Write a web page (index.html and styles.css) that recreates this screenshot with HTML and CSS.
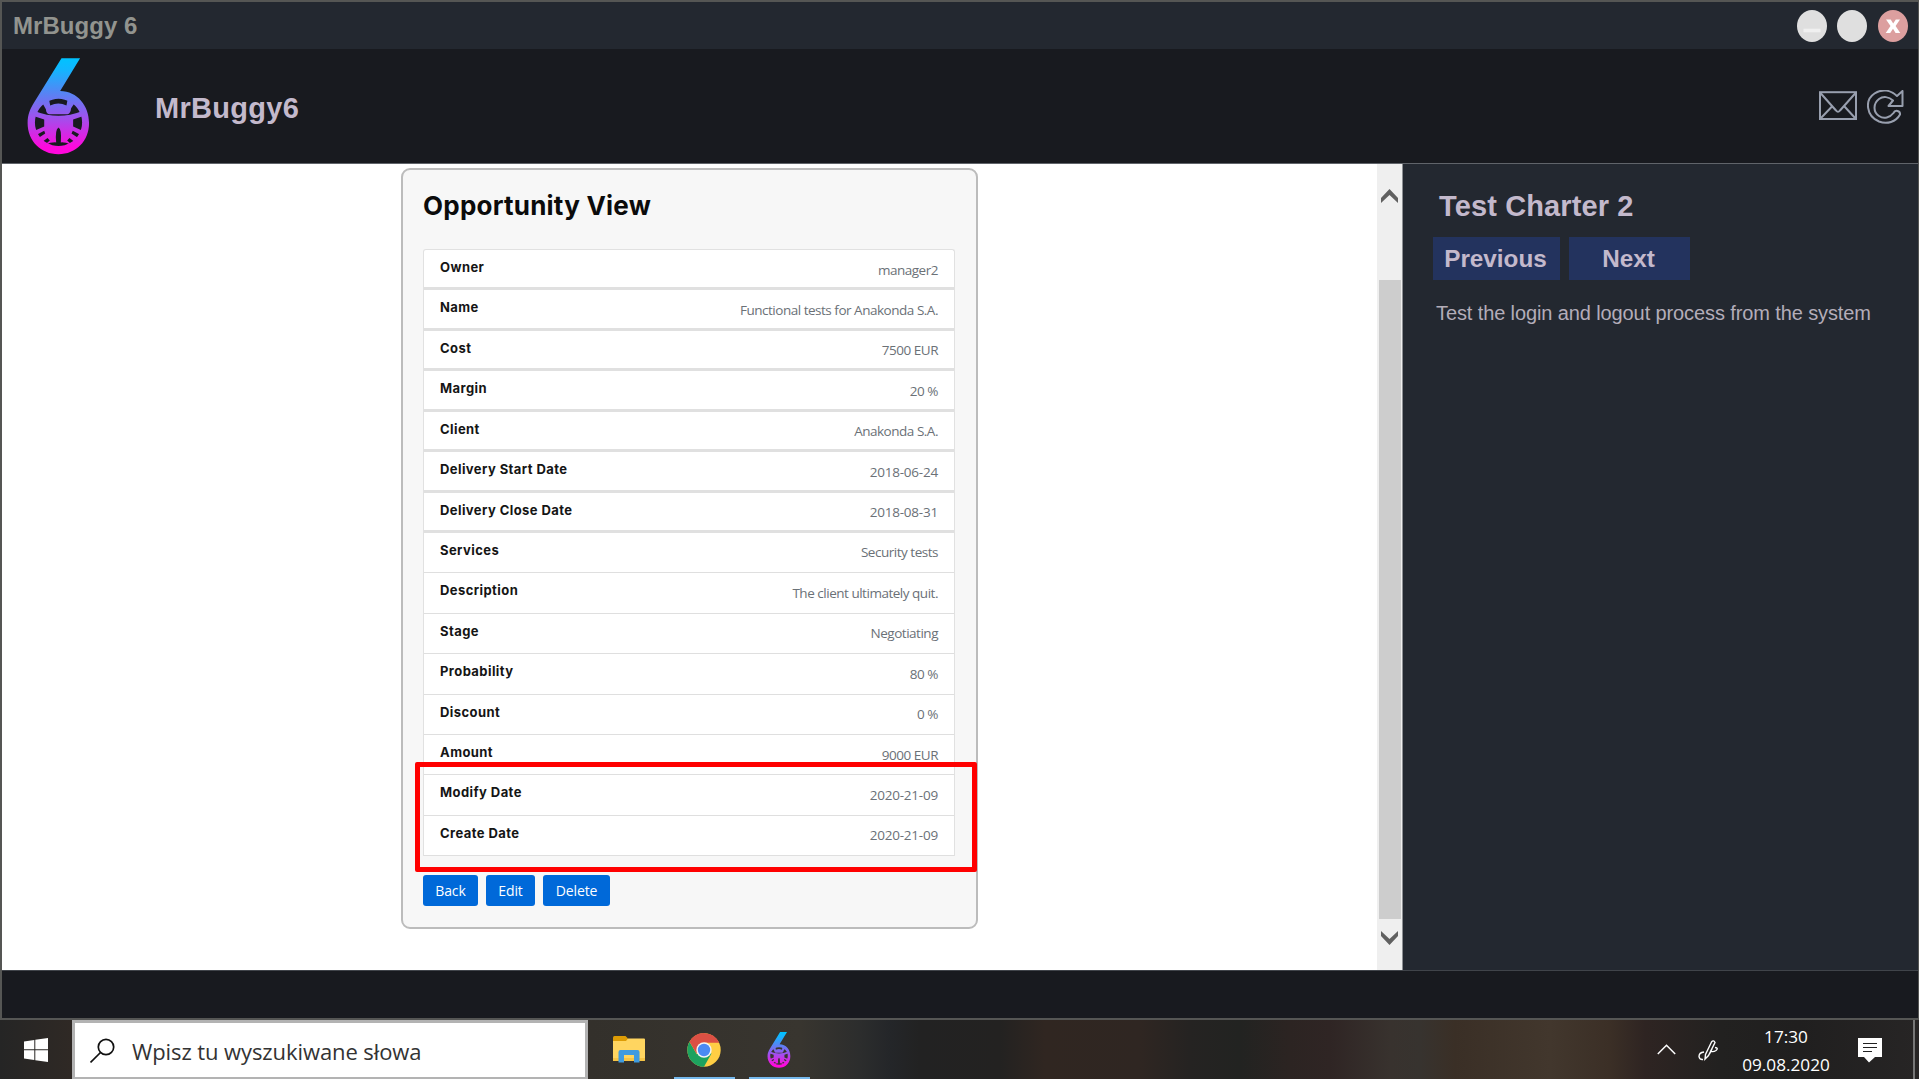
FILE: index.html
```html
<!DOCTYPE html>
<html lang="en">
<head>
<meta charset="utf-8">
<title>MrBuggy 6</title>
<link rel="stylesheet" href="styles.css">
</head>
<body>
<svg class="defs" width="0" height="0" aria-hidden="true">
  <defs>
    <linearGradient id="neon" gradientUnits="userSpaceOnUse" x1="0" y1="24" x2="0" y2="314">
      <stop offset="0" stop-color="#00c3ff"/>
      <stop offset=".12" stop-color="#12b6ff"/>
      <stop offset=".36" stop-color="#5585f4"/>
      <stop offset=".6" stop-color="#9a55ee"/>
      <stop offset=".93" stop-color="#ff08dc"/>
      <stop offset="1" stop-color="#ff08dc"/>
    </linearGradient>
    <symbol id="logo" viewBox="52 24 188 292">
      <path fill="url(#neon)" fill-rule="evenodd" d="M155 25H211L151 123C203 124 238 167 238 220C238 274 199 314 146 314C93 314 53 274 53 220C53 194 61 177 72 159ZM146 147A71 71 0 1 0 146.1 147Z"/>
      <path fill="url(#neon)" d="M98 160 117 146 121 167Q146 155 170 167L174 146 194 160 184 175Q182 192 173 193H118Q109 191 108 178Z"/>
      <path fill="url(#neon)" d="M76 184Q146 212 216 184L219 199 190 209V230L220 244 216 257 189 243 185 251 209 267 200 281 179 265 172 272 186 285Q162 276 153 278 156 237 146 233 135 240 139 278 124 277 105 285L120 272 113 265 91 281 82 267 106 251 103 243 76 257 72 244 103 230V209L73 199Z"/>
    </symbol>
  </defs>
</svg>
<div class="window">
  <header class="titlebar">
    <span class="titlebar-text">MrBuggy 6</span>
    <div class="window-buttons">
      <span class="dot"><svg width="30" height="32" viewBox="0 0 30 32"><path d="M6.500 20.500H23.500" stroke="#f0f0f0" stroke-width="3.500"/></svg></span>
      <span class="dot"></span>
      <span class="dot dot-close"><svg width="30" height="32" viewBox="0 0 30 32"><path d="M8 9.500H12.700L15.200 13.500 17.800 9.500H22L17.600 16 22.300 23H17.600L15 18.700 12.200 23H7.700L12.500 16Z" fill="#fff"/></svg></span>
    </div>
  </header>
  <div class="appbar">
    <svg class="logo" width="63" height="97"><use href="#logo"/></svg>
    <h1 class="app-name">MrBuggy6</h1>
    <div class="app-icons">
      <svg width="38" height="30" viewBox="0 0 38 30" fill="none" stroke="#989fae" stroke-width="2"><rect x="1" y="1.2" width="36" height="26.8"/><path d="M1 1.5 17 19.5Q19 22 21 19.5L37 1.5M1 28 13 15.5M37 28 25.500 15.5"/></svg>
      <svg width="37" height="34" viewBox="0 0 37 34" fill="none" stroke="#989fae" stroke-width="2" stroke-linejoin="round"><path d="M35.500 1V16H21.500L26 10.500C22 6.500 16 6 12 9 6 13.500 6 22 12 26 17 29.500 23 27.500 26.500 23 28 19.500 33.500 20.500 33 24.500 29 32 20 34.500 12 31.500-1 26-2.500 10 7.500 3.500 15-1.500 24 0 30 6Z"/></svg>
    </div>
  </div>
  <div class="workspace">
    <main class="page">
      <section class="card">
        <h2 class="card-title">Opportunity View</h2>
        <ul class="fields">
          <li class="field thick"><b>Owner</b><span>manager2</span></li>
          <li class="field thick"><b>Name</b><span>Functional tests for Anakonda S.A.</span></li>
          <li class="field thick"><b>Cost</b><span>7500 EUR</span></li>
          <li class="field thick"><b>Margin</b><span>20 %</span></li>
          <li class="field thick"><b>Client</b><span>Anakonda S.A.</span></li>
          <li class="field thick"><b>Delivery Start Date</b><span class="date">2018-06-24</span></li>
          <li class="field thick"><b>Delivery Close Date</b><span class="date">2018-08-31</span></li>
          <li class="field"><b>Services</b><span>Security tests</span></li>
          <li class="field"><b>Description</b><span>The client ultimately quit.</span></li>
          <li class="field"><b>Stage</b><span>Negotiating</span></li>
          <li class="field"><b>Probability</b><span>80 %</span></li>
          <li class="field"><b>Discount</b><span>0 %</span></li>
          <li class="field"><b>Amount</b><span>9000 EUR</span></li>
          <li class="field"><b>Modify Date</b><span class="date">2020-21-09</span></li>
          <li class="field"><b>Create Date</b><span class="date">2020-21-09</span></li>
        </ul>
        <div class="actions">
          <button class="btn btn-back">Back</button>
          <button class="btn btn-edit">Edit</button>
          <button class="btn btn-delete">Delete</button>
        </div>
        <div class="highlight"></div>
      </section>
    </main>
    <div class="scrollbar">
      <svg class="arrow-up" width="17" height="14" viewBox="0 0 17 14"><path d="M0 9 8.500 0 17 9V14L8.500 6 0 14Z" fill="#606060"/></svg>
      <div class="thumb"></div>
      <svg class="arrow-down" width="17" height="14" viewBox="0 0 17 14"><path d="M0 5 8.500 14 17 5V0L8.500 8 0 0Z" fill="#606060"/></svg>
    </div>
    <aside class="charter">
      <h2 class="charter-title">Test Charter 2</h2>
      <div class="charter-nav">
        <button class="nav-btn nav-prev">Previous</button>
        <button class="nav-btn nav-next">Next</button>
      </div>
      <p class="charter-text">Test the login and logout process from the system</p>
    </aside>
  </div>
  <footer class="footer"></footer>
</div>
<div class="taskbar">
  <div class="start"><svg width="24" height="24" viewBox="0 0 24 24" fill="#fff"><path d="M0 3.400 10.300 2V11.300H0ZM11.300 1.700 24 0V11.300H11.300ZM0 12.300H10.300V21.900L0 20.600ZM11.300 12.300H24V24L11.300 22.200Z"/></svg></div>
  <div class="search">
    <svg width="26" height="26" viewBox="0 0 26 26" fill="none" stroke="#111" stroke-width="1.700"><circle cx="16" cy="9" r="7.700"/><path d="M10.500 14.500 .5 24.500"/></svg>
    <span>Wpisz tu wyszukiwane słowa</span>
  </div>
  <div class="apps">
    <div class="app">
      <svg width="32" height="27" viewBox="0 0 32 27"><path d="M0 1.500Q0 0 1.500 0H12.500L15 2.500V6H0Z" fill="#dd9c05"/><path d="M0 5H13L15 2.500H31Q32 2.500 32 3.500V24Q32 25 31 25H0Z" fill="#ffd560"/><path d="M0 22H32V24Q32 25 31 25H0Z" fill="#f6c445"/><path d="M5.500 26.500V16Q5.500 14 7.500 14H24.500Q26.500 14 26.500 16V26.500H21V19H11V26.500Z" fill="#3f9be0"/></svg>
    </div>
    <div class="app running">
      <svg width="34" height="34" viewBox="0 0 34 34"><circle cx="17" cy="17" r="16.700" fill="#ffce44"/><path d="M2.500 8.700A16.700 16.700 0 0 0 17 33.700L24.500 20.500 17 17 9.800 21.300Z" fill="#1da25f"/><path d="M2.500 8.700A16.700 16.700 0 0 1 32.200 9.700H17L9.500 20.500Z" fill="#dc5044"/><circle cx="17" cy="17" r="7.700" fill="#f4f4f4"/><circle cx="17" cy="17" r="6.200" fill="#4a8af4"/></svg>
    </div>
    <div class="app running">
      <svg width="24" height="36" viewBox="0 0 24 36"><use href="#logo" width="24" height="36"/></svg>
    </div>
  </div>
  <div class="tray">
    <svg width="19" height="11" viewBox="0 0 19 11" fill="none" stroke="#fff" stroke-width="1.500"><path d="M.8 10 9.500 1.300 18.200 10"/></svg>
    <svg class="pen" width="21" height="21" viewBox="0 0 21 21" fill="none" stroke="#fff" stroke-width="1.400"><path d="M7 19 7.500 14.500 13.500 2Q15.500-.5 17 2.500L10.500 15.500ZM6 12Q1 12.500 1 16.500 1.500 20 5 19.500M12 11Q15 12.500 18 10.500 21 8 17 7.500M11.500 14 14 9"/></svg>
    <div class="clock"><span>17:30</span><span>09.08.2020</span></div>
    <svg class="note" width="24" height="25" viewBox="0 0 24 25"><path d="M0 0H24V19H17L11 24.500 6 19H0Z" fill="#fff"/><path d="M5 5.500H19M5 9.500H19M5 13.500H14" stroke="#222" stroke-width="1.200"/></svg>
  </div>
  <div class="peek"></div>
</div>
</body>
</html>
```
FILE: styles.css
```css
* { box-sizing: border-box; }
body {
  margin: 0;
  width: 1919px;
  height: 1079px;
  overflow: hidden;
  display: flex;
  flex-direction: column;
  font-family: "Liberation Sans", Arial, sans-serif;
}
h1, h2, p, ul { margin: 0; padding: 0; }
button { border: 0; padding: 0; font: inherit; color: inherit; }
svg { display: block; flex: none; }
.defs { position: absolute; }

.window {
  height: 1020px;
  flex: none;
  display: flex;
  flex-direction: column;
  border: 1px solid #555654;
  border-width: 2px 1px 2px 2px;
  background: #181a1f;
}
.titlebar {
  height: 47px;
  flex: none;
  display: flex;
  align-items: center;
  justify-content: space-between;
  padding: 0 10px 0 11px;
  background: #232830;
}
.titlebar-text {
  font-size: 24px;
  font-weight: 700;
  letter-spacing: .05px;
  color: #92948f;
}
.window-buttons { display: flex; gap: 10.6px; }
.dot {
  width: 30px;
  height: 32px;
  border-radius: 50%;
  background: #dfdfdf;
}
.dot-close { background: #dc9f9f; }

.appbar {
  height: 114px;
  flex: none;
  display: flex;
  padding: 0 14px 0 25px;
}
.logo { margin-top: 9px; }
.app-name {
  margin: 42px auto 0 65px;
  font-size: 29px;
  line-height: 34px;
  letter-spacing: .3px;
  color: #c3b9cc;
}
.app-icons { display: flex; gap: 10px; margin-top: 41px; }
.app-icons svg:first-child { margin-top: 1px; }

.workspace {
  height: 807px;
  flex: none;
  display: flex;
  border-top: 1px solid #60646a;
}
.page {
  width: 1375px;
  flex: none;
  padding: 4px 0 0 399px;
  background: #fff;
}
.card {
  position: relative;
  width: 577px;
  height: 761px;
  padding: 17px 21px 0 20px;
  border: 2px solid #bcbcbc;
  border-radius: 9px;
  background: #f7f7f7;
}
.card-title {
  font: 700 26px/38px Inter, sans-serif;
  letter-spacing: .23px;
  color: #0b0b0b;
}
.fields {
  margin-top: 24px;
  list-style: none;
  border: 1px solid #e1e1e1;
  border-bottom: 0;
  border-radius: 3px 3px 0 0;
  background: #fff;
}
.field {
  height: 40.430px;
  display: flex;
  justify-content: space-between;
  padding: 0 16px;
  border-bottom: 1px solid #dfdfdf;
}
.field.thick { border-bottom-width: 3px; border-bottom-color: #e0e0e0; }
.field b {
  margin-top: 7px;
  font: 700 13px/20px Inter, sans-serif;
  letter-spacing: .42px;
  color: #151515;
}
.field span {
  margin-top: 9.500px;
  font: 13.500px/20px "Open Sans", "Noto Sans", sans-serif;
  letter-spacing: -.48px;
  color: #6b7177;
}
.field .date { letter-spacing: -.22px; }
.actions { display: flex; margin-top: 19px; }
.btn {
  height: 31px;
  border-radius: 3px;
  background: #0069d9;
  color: #fff;
  font: 14px/32px "Open Sans", "Noto Sans", sans-serif;
  letter-spacing: -.1px;
}
.btn-back { width: 55px; }
.btn-edit { width: 49px; margin-left: 8px; }
.btn-delete { width: 67px; margin-left: 8px; }
.highlight {
  position: absolute;
  left: 12px;
  top: 592px;
  width: 562px;
  height: 110px;
  border: 5px solid #f00;
  border-radius: 2px;
}

.scrollbar {
  width: 26px;
  flex: none;
  display: flex;
  flex-direction: column;
  padding: 25px 1px 25px 1px;
  border-right: 1px solid #8c8f93;
  background: #efefef;
}
.arrow-up, .arrow-down { margin-left: 3px; }
.thumb {
  flex: 1;
  margin: 77px 0 12px 1px;
  background: #cdcdcd;
}

.charter { flex: 1; padding: 25px 0 0 30px; background: #232830; color: #c3b9cc; }
.charter-title {
  margin-left: 6px;
  font-size: 29px;
  line-height: 34px;
  letter-spacing: .12px;
}
.charter-nav { display: flex; gap: 9px; margin-top: 14px; }
.nav-btn {
  height: 43px;
  background: #23335e;
  font-size: 24.300px;
  font-weight: 700;
  line-height: 42px;
}
.nav-prev { width: 127px; padding-right: 2px; }
.nav-next { width: 121px; padding-right: 2px; }
.charter-text {
  margin: 21px 0 0 3px;
  font-size: 20px;
  line-height: 24px;
  letter-spacing: -.11px;
  color: #b3adb9;
}
.footer { flex: 1; border-top: 1px solid #40444a; background: #181a1f; }

.taskbar {
  height: 59px;
  flex: none;
  display: flex;
  background: linear-gradient(90deg,
    #252525 0, #2f2925 72px, #33302b 590px, #38352f 800px, #2c2d2d 860px,
    #242629 890px, #222 920px, #232221 1000px, #302621 1045px, #2f2622 1140px,
    #252322 1190px, #222321 1240px, #2c2422 1290px, #2f2524 1330px,
    #38322e 1390px, #37332f 1420px, #3a2f26 1455px, #42372d 1550px,
    #3b2f26 1610px, #2e2422 1645px, #222120 1720px, #201f1f 1800px, #272525 1919px);
}
.start { width: 72px; padding: 18px 0 0 24px; }
.search {
  width: 516px;
  display: flex;
  padding: 15px 0 0 15px;
  border: 3px solid #b3b3b3;
  border-bottom-width: 2px;
  background: #fff;
  font: 22px/30px "Open Sans", "Noto Sans", sans-serif;
  letter-spacing: -.09px;
  color: #333;
}
.search span { margin: -2px 0 0 16px; }
.apps { display: flex; gap: 14px; margin-left: 11px; }
.app {
  width: 61px;
  display: flex;
  align-items: center;
  justify-content: center;
  padding: 2px 2px 0 0;
  border-bottom: 2px solid transparent;
}
.running { border-bottom-color: #76b9ed; }
.tray { display: flex; margin-left: 847px; color: #fff; }
.tray svg:first-child { margin-top: 24px; }
.tray .pen { margin: 20px 0 0 22px; }
.clock {
  width: 90px;
  margin: 3px 27px 0 22px;
  display: flex;
  flex-direction: column;
  align-items: center;
  font: 17.200px/28px "Open Sans", "Noto Sans", sans-serif;
}
.tray .note { margin-top: 18px; }
.peek { width: 2px; margin-left: auto; margin-right: 4px; background: #777; }
```
